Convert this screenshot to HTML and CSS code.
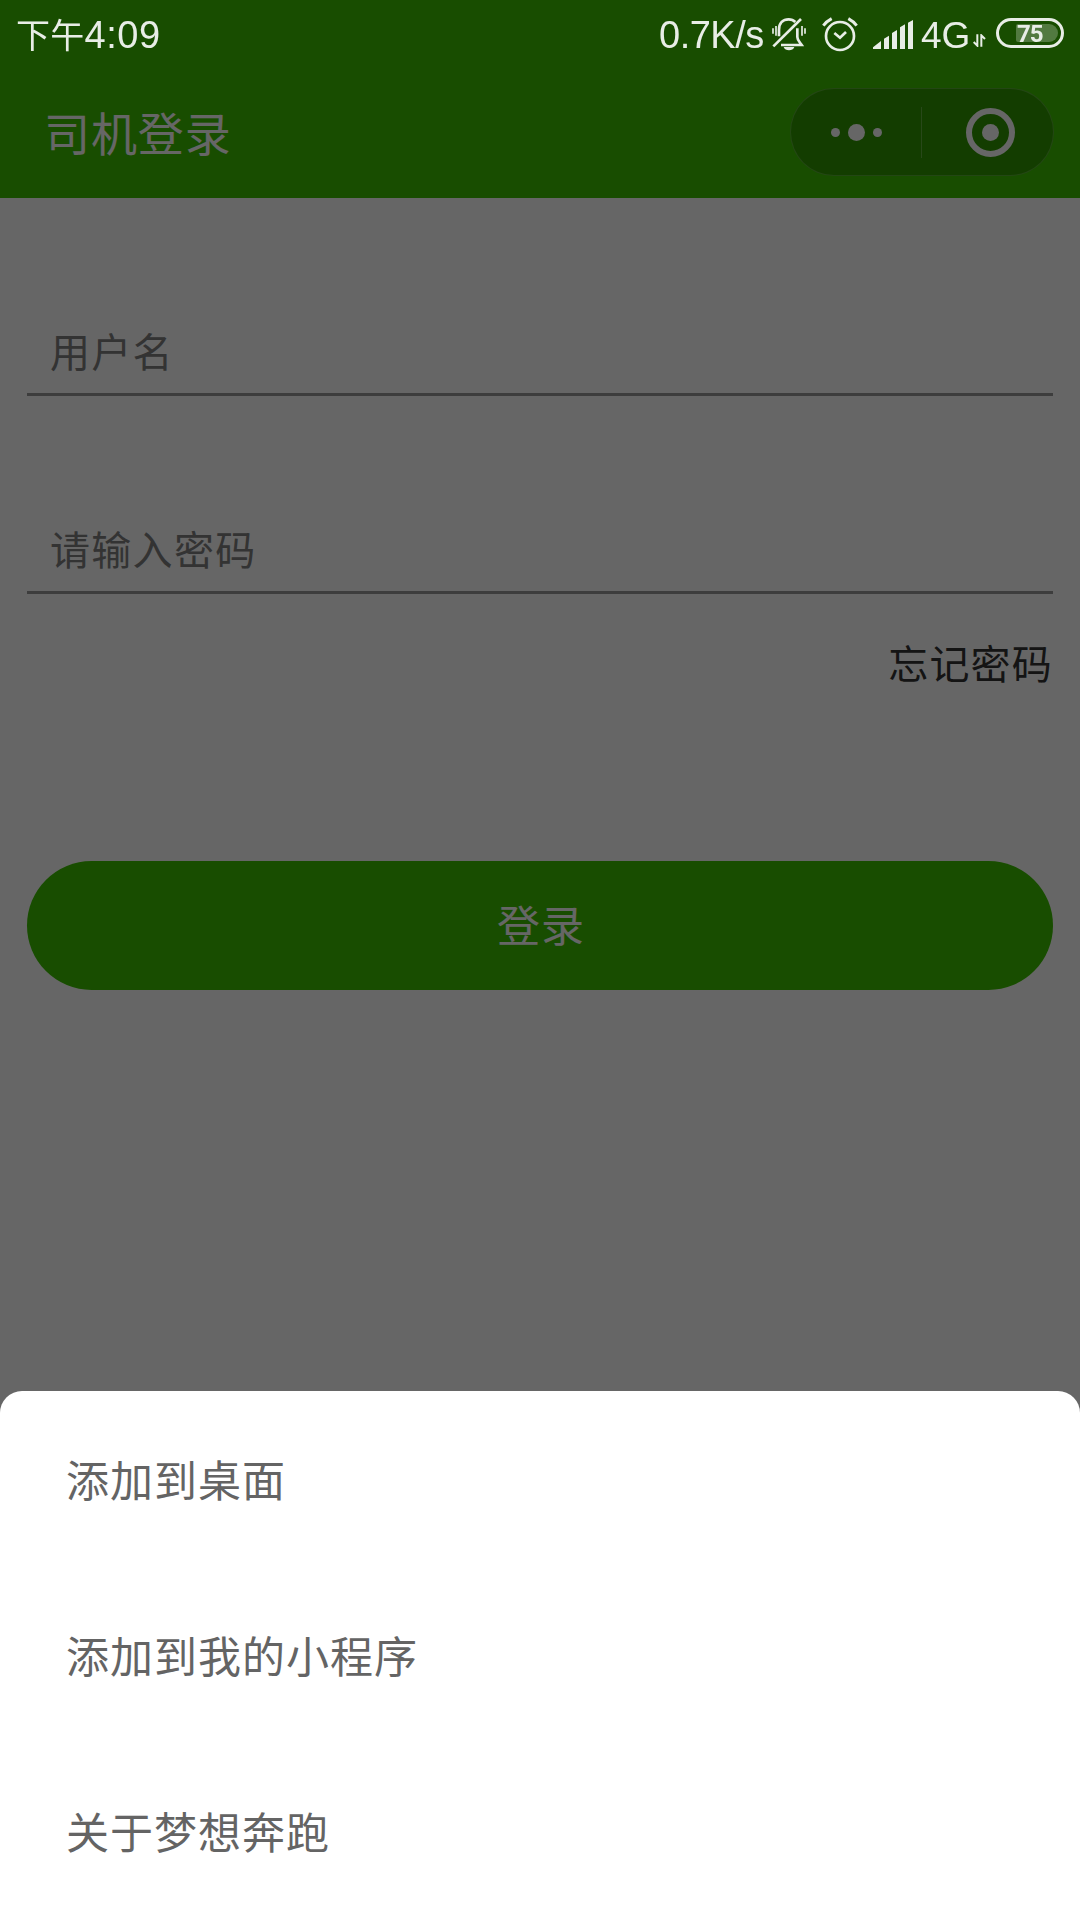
FILE: index.html
```html
<!DOCTYPE html>
<html lang="zh-CN">
<head>
    <meta charset="utf-8">
    <meta name="viewport" content="width=device-width, initial-scale=1.0">
    <title>司机登录</title>
    <link rel="stylesheet" href="styles.css">
</head>
<body>
    <div class="page">
        <div class="navbar">
            <div class="title">司机登录</div>
            <div class="capsule">
                <div class="capsule-btn more">
                    <span class="dot"></span>
                    <span class="dot big"></span>
                    <span class="dot"></span>
                </div>
                <div class="capsule-line"></div>
                <div class="capsule-btn close">
                    <span class="ring"><span class="ring-dot"></span></span>
                </div>
            </div>
        </div>
        <form class="login-form">
            <input class="field" type="text" placeholder="用户名">
            <input class="field" type="password" placeholder="请输入密码">
            <a class="forgot">忘记密码</a>
            <button class="login-btn" type="button">登录</button>
        </form>
    </div>

    <div class="mask"></div>

    <div class="status-bar">
        <div class="time"><span class="ampm">下午</span>4:09</div>
        <div class="status-icons">
            <span class="speed">0.7K/s</span>
            <svg class="icon-bell" width="37" height="35" viewBox="0 0 111 105" fill="none" stroke="currentColor" stroke-width="8">
                <path d="M24 58V38C24 18 36 7 53 7C62 7 68 10 73 15"/>
                <path d="M79 34V60C79 70 86 75 92 84H30"/>
                <path d="M7 88L90 6"/>
                <path d="M38 90H70C66 103 42 103 38 90Z" fill="currentColor" stroke="none"/>
                <path d="M6 34V50M15 27V56M93 27V56M102 34V50" stroke-width="5"/>
            </svg>
            <svg class="icon-alarm" width="36" height="36" viewBox="0 0 108 108" fill="none" stroke="currentColor" stroke-width="8">
                <circle cx="54" cy="60" r="42"/>
                <path d="M4 29Q14 16 29 8M79 8Q94 16 104 29" stroke-width="9"/>
                <path d="M37 51L54 65L72 48"/>
            </svg>
            <svg class="icon-signal" width="40" height="29" viewBox="0 0 120 87" fill="currentColor">
                <path d="M0 82L24 63V87H0ZM33 56L48 47V87H33ZM57 39L72 30V87H57ZM81 22L96 13V87H81ZM105 8L120 0V87H105Z"/>
            </svg>
            <span class="network">4G</span>
            <svg class="icon-data" width="13" height="13" viewBox="0 0 39 39" fill="none" stroke="currentColor" stroke-width="6">
                <path d="M13 1V35L2 24M25 38V4L36 15"/>
            </svg>
            <div class="battery"><div class="battery-level">75</div></div>
        </div>
    </div>

    <div class="action-sheet">
        <div class="action-item">添加到桌面</div>
        <div class="action-item">添加到我的小程序</div>
        <div class="action-item">关于梦想奔跑</div>
    </div>
</body>
</html>
```
FILE: styles.css
```css
* {
    box-sizing: border-box;
}
body {
    margin: 0;
    background: #fff;
    font-family: "Liberation Sans", "Noto Sans CJK SC", sans-serif;
    height: 1920px;
    overflow: hidden;
}
.navbar {
    height: 198px;
    padding: 66px 26px 0 44px;
    background: #3cc100;
    display: flex;
    justify-content: space-between;
    align-items: center;
}
.title {
    color: #fff;
    font-size: 46px;
    letter-spacing: 0.9px;
    padding-bottom: 2px;
}
.capsule {
    display: flex;
    align-items: center;
    width: 264px;
    height: 88px;
    border: 1px solid rgba(255, 255, 255, 0.2);
    border-radius: 44px;
    background: rgba(0, 0, 0, 0.2);
}
.capsule-btn {
    width: 131px;
    display: flex;
    justify-content: center;
    align-items: center;
    gap: 8px;
}
.more {
    padding-left: 1px;
}
.capsule-line {
    width: 1px;
    height: 51px;
    background: rgba(255, 255, 255, 0.25);
}
.dot {
    width: 9px;
    height: 9px;
    border-radius: 50%;
    background: #fff;
}
.dot.big {
    width: 17px;
    height: 17px;
}
.close {
    padding-left: 6px;
}
.ring {
    width: 49px;
    height: 49px;
    border: 6px solid #fff;
    border-radius: 50%;
    display: flex;
    justify-content: center;
    align-items: center;
}
.ring-dot {
    width: 17px;
    height: 17px;
    border-radius: 50%;
    background: #fff;
}
.login-form {
    display: flex;
    flex-direction: column;
    padding: 111px 27px 0;
}
.field {
    height: 87px;
    margin-bottom: 111px;
    padding: 4px 23px 0;
    border: none;
    border-bottom: 3px solid #999;
    background: none;
    font-family: inherit;
    font-size: 40px;
    letter-spacing: 1.3px;
}
.field::placeholder {
    color: #808080;
    opacity: 1;
}
.field + .field {
    margin-bottom: 41px;
}
.forgot {
    align-self: flex-end;
    color: #333;
    font-size: 40px;
    line-height: 60px;
    letter-spacing: 1.2px;
}
.login-btn {
    height: 129px;
    margin-top: 166px;
    padding: 0 0 5px 2px;
    border: none;
    border-radius: 65px;
    background: #3cc100;
    color: #fff;
    font-family: inherit;
    font-size: 43px;
    letter-spacing: 1px;
}
.mask {
    position: fixed;
    inset: 0;
    background: rgba(0, 0, 0, 0.6);
}
.status-bar {
    position: fixed;
    top: 0;
    left: 0;
    right: 0;
    height: 68px;
    padding: 0 16px;
    display: flex;
    justify-content: space-between;
    align-items: center;
    color: #e8ede6;
    font-size: 38px;
}
.time {
    display: flex;
    align-items: center;
    padding-top: 2px;
    letter-spacing: 0.5px;
}
.ampm {
    font-size: 34px;
    letter-spacing: 0.3px;
    padding-bottom: 3px;
}
.status-icons {
    display: flex;
    align-items: center;
}
.speed {
    width: 112px;
    padding-top: 3px;
    letter-spacing: -0.5px;
}
.icon-alarm {
    margin-left: 14px;
}
.icon-signal {
    margin-left: 15px;
}
.network {
    width: 52px;
    margin-left: 8px;
    padding-top: 3px;
    font-size: 37px;
}
.icon-data {
    margin-top: 12px;
}
.battery {
    width: 68px;
    height: 30px;
    margin-left: 10px;
    margin-top: -2px;
    padding: 3px 3px 3px 17px;
    border: 3px solid #e8ede6;
    border-radius: 15px;
}
.battery-level {
    height: 18px;
    border-radius: 2px 9px 9px 2px;
    background: rgba(255, 255, 255, 0.25);
    font-family: Roboto, sans-serif;
    font-size: 24px;
    font-weight: bold;
    letter-spacing: -1px;
    line-height: 20px;
    padding-left: 1px;
}
.action-sheet {
    position: fixed;
    left: 0;
    right: 0;
    bottom: 0;
    height: 529px;
    padding-top: 3px;
    border-radius: 22px 22px 0 0;
    background: #fff;
}
.action-item {
    height: 176px;
    padding-left: 66px;
    color: #646464;
    font-size: 43px;
    line-height: 176px;
    letter-spacing: 1px;
}
```
